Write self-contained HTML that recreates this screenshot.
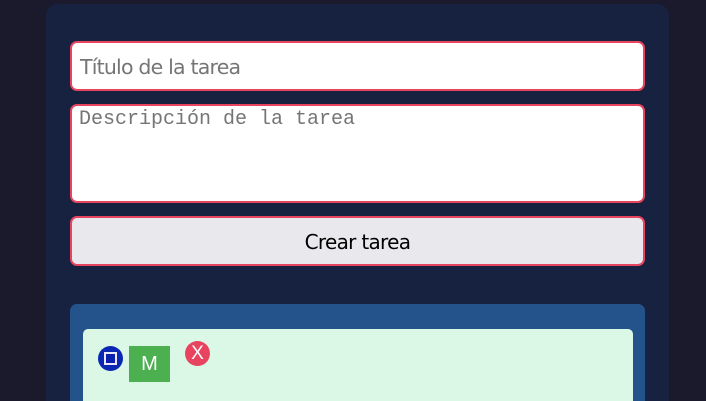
<!DOCTYPE html>
<html><head><style>
*{box-sizing:border-box;margin:0;padding:0}
html,body{width:706px;height:401px;overflow:hidden}
body{background:#1b1a2d;position:relative;font-family:"DejaVu Sans","Liberation Sans",sans-serif}
.c{position:absolute;left:46px;top:4px;width:623px;height:397px;background:#172240;border-radius:12px 12px 0 0}
.in{position:absolute;left:70px;width:575px;border:2px solid #e8435f;border-radius:7px;background:#fff}
.t{top:41px;height:50px;font-size:20.5px;color:#757575;padding:12px 0 0 8px;font-family:"DejaVu Sans",sans-serif;letter-spacing:-0.8px}
.d{top:104px;height:99px;font-family:"Liberation Mono",monospace;font-size:20px;color:#757575;padding:2px 0 0 7px}
.b{top:216px;height:50px;background:#e9e8ec;text-align:center;font-size:20px;color:#000;padding-top:12px;letter-spacing:-0.7px}
.p{position:absolute;left:70px;top:304px;width:575px;height:97px;background:#24528a;border-radius:7px 7px 0 0}
.card{position:absolute;left:83px;top:329px;width:550px;height:72px;background:#dbf7e6;border-radius:5px 5px 0 0}
.o{position:absolute;left:98px;top:346px;width:25px;height:25px;border-radius:50%;background:#0a27b4}
.o i{position:absolute;left:6px;top:6px;width:13px;height:13px;border:2px solid #e9e8f8;background:#0a1fb0}
.m{position:absolute;left:129px;top:346px;width:41px;height:36px;background:#4caf50;color:#fff;font-size:20px;text-align:center;line-height:36px;font-family:"Liberation Sans",sans-serif}
.x{position:absolute;left:185px;top:341px;width:25px;height:25px;border-radius:50%;background:#e8435f;color:#fff;font-size:19px;text-align:center;line-height:25px;font-family:"Liberation Sans",sans-serif}
</style></head><body>
<div class="c"></div>
<div class="in t">Título de la tarea</div>
<div class="in d">Descripción de la tarea</div>
<div class="in b">Crear tarea</div>
<div class="p"></div>
<div class="card"></div>
<div class="o"><i></i></div>
<div class="m">M</div>
<div class="x">X</div>
</body></html>
